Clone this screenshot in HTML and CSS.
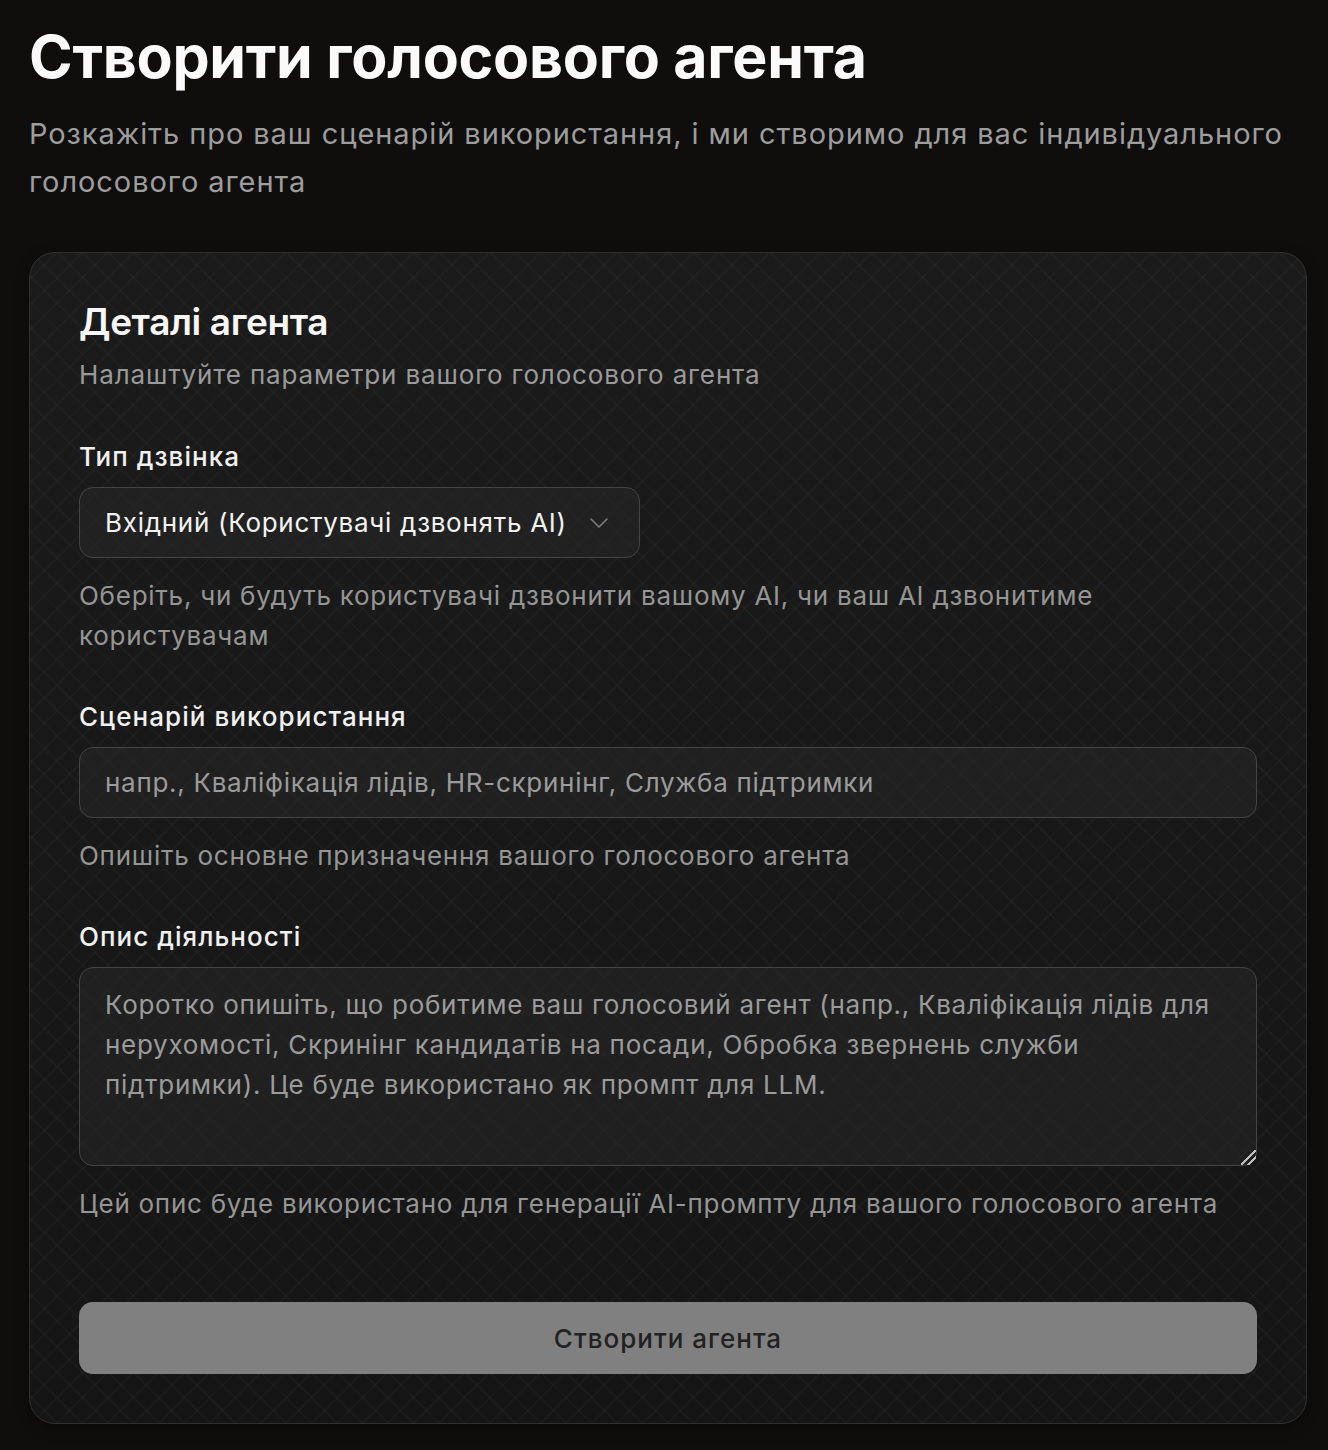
FILE: index.html
```html
<!DOCTYPE html>
<html lang="uk">
<head>
<meta charset="utf-8">
<title>Створити голосового агента</title>
<link rel="stylesheet" href="styles.css">
</head>
<body>
<main class="page">
  <header class="page-head">
    <h1 class="page-title">Створити голосового агента</h1>
    <p class="page-sub">Розкажіть про ваш сценарій використання, і ми створимо для вас індивідуального голосового агента</p>
  </header>

  <section class="card">
    <div class="card-head">
      <h2 class="card-title">Деталі агента</h2>
      <p class="card-sub">Налаштуйте параметри вашого голосового агента</p>
    </div>

    <div class="field">
      <label class="label">Тип дзвінка</label>
      <button class="select" type="button">
        <span>Вхідний (Користувачі дзвонять AI)</span>
        <svg class="chev" width="20" height="12" viewBox="0 0 20 12" fill="none"><path d="M2 2l8 8 8-8" stroke="currentColor" stroke-width="1.6" stroke-linecap="round" stroke-linejoin="round"/></svg>
      </button>
      <p class="help">Оберіть, чи будуть користувачі дзвонити вашому AI, чи ваш AI дзвонитиме користувачам</p>
    </div>

    <div class="field">
      <label class="label">Сценарій використання</label>
      <input class="input" type="text" placeholder="напр., Кваліфікація лідів, HR-скринінг, Служба підтримки">
      <p class="help">Опишіть основне призначення вашого голосового агента</p>
    </div>

    <div class="field">
      <label class="label">Опис діяльності</label>
      <textarea class="textarea" placeholder="Коротко опишіть, що робитиме ваш голосовий агент (напр., Кваліфікація лідів для нерухомості, Скринінг кандидатів на посади, Обробка звернень служби підтримки). Це буде використано як промпт для LLM."></textarea>
      <p class="help">Цей опис буде використано для генерації AI-промпту для вашого голосового агента</p>
    </div>

    <button class="submit" type="button">Створити агента</button>
  </section>
</main>
</body>
</html>
```

FILE: styles.css
```css
* { box-sizing: border-box; }

html, body {
  margin: 0;
  background: #0f0e0d;
  color: #f5f5f5;
  font-family: Inter, "Noto Sans", "Liberation Sans", sans-serif;
  color-scheme: dark;
}

.page {
  padding: 22px 21px 26px 29px;
}

.page-head {
  margin-bottom: 46px;
}

.page-title {
  margin: 0;
  font-size: 59px;
  line-height: 70px;
  font-weight: 700;
  letter-spacing: -0.25px;
  color: #fafafa;
}

.page-sub {
  margin: 18px 0 0;
  font-size: 29px;
  line-height: 48px;
  letter-spacing: 0.93px;
  color: #9d9d9d;
  font-weight: 400;
}

.card {
  border: 1.5px solid #303030;
  border-radius: 26px;
  padding: 44px 49px 49px;
  background-color: #181818;
  background-image:
    repeating-linear-gradient(45deg, rgba(255,255,255,0.018) 0 2px, transparent 2px 18px),
    repeating-linear-gradient(-45deg, rgba(255,255,255,0.018) 0 2px, transparent 2px 18px),
    linear-gradient(180deg, #1b1b1b 0%, #151515 100%);
  box-shadow: 0 4px 14px rgba(0,0,0,0.35);
  display: flex;
  flex-direction: column;
}

.card-head {
  margin-bottom: 42px;
}

.card-title {
  margin: 0;
  font-size: 37px;
  line-height: 50px;
  font-weight: 600;
  letter-spacing: -0.4px;
  color: #f7f7f7;
}

.card-sub {
  margin: 8px 0 0;
  font-size: 26px;
  line-height: 40px;
  letter-spacing: 0.86px;
  color: #9a9a9a;
}

.field {
  display: flex;
  flex-direction: column;
  margin-bottom: 41px;
}

.field:last-of-type {
  margin-bottom: 78px;
}

.label {
  font-size: 26px;
  line-height: 40px;
  font-weight: 500;
  letter-spacing: 1.05px;
  color: #f0f0f0;
  margin-bottom: 10px;
}

.select,
.input,
.textarea {
  font-family: inherit;
  font-size: 26px;
  letter-spacing: 0.72px;
  border: 1.5px solid #444444;
  border-radius: 14px;
  background: rgba(40,40,40,0.55);
  color: #f2f2f2;
}

.select {
  width: 561px;
  height: 71px;
  padding: 0 30px 0 25px;
  display: flex;
  align-items: center;
  justify-content: space-between;
  text-align: left;
  cursor: pointer;
}

.chev {
  color: #7d7d7d;
  flex: none;
}

.input {
  height: 71px;
  padding: 0 25px;
  width: 100%;
  outline: none;
}

.input::placeholder,
.textarea::placeholder {
  color: #9b9b9b;
  opacity: 1;
}

.textarea {
  width: 100%;
  height: 199px;
  padding: 17px 25px;
  line-height: 40px;
  resize: vertical;
  outline: none;
  display: block;
}

.textarea::-webkit-resizer {
  background: linear-gradient(135deg,
    transparent 0 44%, #bdbdbd 44% 54%, transparent 54% 68%,
    #bdbdbd 68% 78%, transparent 78% 100%);
}

.help {
  margin: 18px 0 0;
  font-size: 26px;
  line-height: 40px;
  letter-spacing: 0.74px;
  color: #959595;
}

.submit {
  height: 72px;
  border: none;
  border-radius: 14px;
  background: #808080;
  color: #222222;
  font-family: inherit;
  font-size: 26px;
  font-weight: 500;
  letter-spacing: 1px;
  cursor: pointer;
}
```
